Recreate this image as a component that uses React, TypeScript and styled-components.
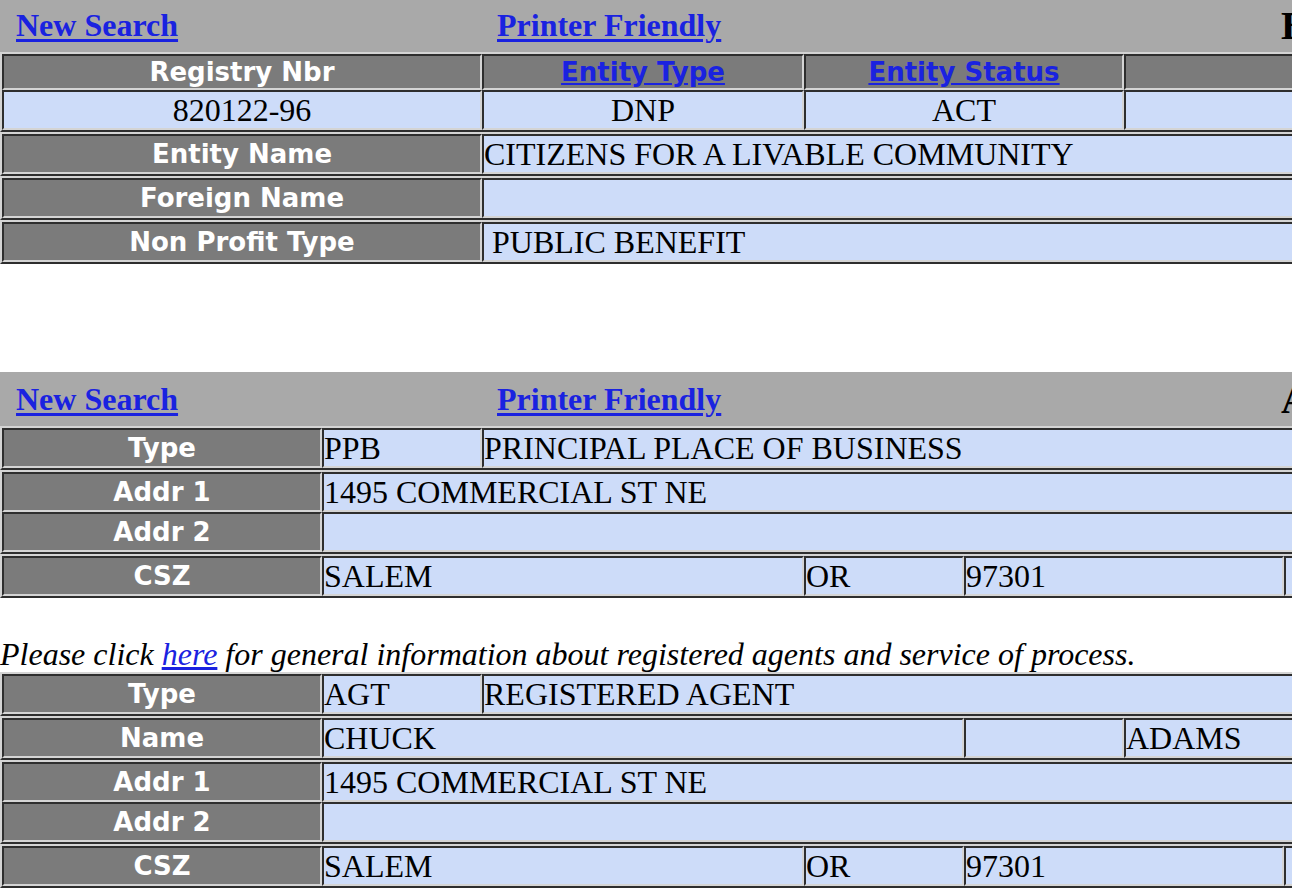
import React from 'react';
import styled, { createGlobalStyle } from 'styled-components';

const LIGHT = '#d4d4d4';
const DARK = '#2e2e2e';
const LINK = '#1a22e0';

const GlobalStyle = createGlobalStyle`
  html, body {
    margin: 0;
    padding: 0;
    background: #ffffff;
    overflow: hidden;
  }
  body {
    font-family: "Liberation Serif", "Times New Roman", serif;
    font-size: 32px;
    color: #000000;
  }
`;

const Page = styled.div`
  width: 1760px;
  margin-top: -2px;
`;

const Bar = styled.div`
  display: flex;
  align-items: center;
  height: 54px;
  padding-left: 16px;
  background: #a9a9a9;
`;

const BarSlot = styled.div<{ $w?: number }>`
  flex: ${(p) => (p.$w ? `0 0 ${p.$w}px` : '1 1 auto')};
  white-space: nowrap;
`;

const BarLink = styled.a`
  font-weight: bold;
  color: ${LINK};
  text-decoration: underline;
  text-underline-offset: 3px;
`;

const BarTitle = styled.span`
  font-size: 40px;
  font-weight: bold;
`;

const Grid = styled.div`
  border: 2px solid;
  border-color: ${LIGHT} ${DARK} ${DARK} ${LIGHT};
`;

const Row = styled.div`
  display: flex;
`;

const Cell = styled.div<{ $w?: number; $center?: boolean }>`
  box-sizing: border-box;
  flex: ${(p) => (p.$w ? `0 0 ${p.$w}px` : '1 1 auto')};
  border: 2px solid;
  border-color: ${DARK} ${LIGHT} ${LIGHT} ${DARK};
  white-space: nowrap;
  overflow: hidden;
`;

const Label = styled(Cell)`
  display: flex;
  align-items: center;
  justify-content: center;
  background: #7b7b7b;
  color: #ffffff;
  font-family: "DejaVu Sans", Verdana, sans-serif;
  font-weight: bold;
  font-size: 26px;
  line-height: 32px;
`;

const HeadLink = styled.a`
  color: ${LINK};
  text-decoration: underline;
`;

const Data = styled(Cell)`
  background: #cddcf9;
  line-height: 36px;
  text-align: ${(p) => (p.$center ? 'center' : 'left')};
`;

const Spacer = styled.div<{ $h: number }>`
  height: ${(p) => p.$h}px;
`;

const Note = styled.div`
  margin-top: 38px;
  line-height: 36px;
  font-style: italic;
  white-space: nowrap;
`;

const NoteLink = styled.a`
  color: ${LINK};
  text-decoration: underline;
`;

function TopBar({ title }: { title: string }) {
  return (
    <Bar>
      <BarSlot $w={481}>
        <BarLink href="#">New Search</BarLink>
      </BarSlot>
      <BarSlot $w={784}>
        <BarLink href="#">Printer Friendly</BarLink>
      </BarSlot>
      <BarSlot>
        <BarTitle>{title}</BarTitle>
      </BarSlot>
    </Bar>
  );
}

function AddressBlock({ type, typeName }: { type: string; typeName: string }) {
  return (
    <>
      <Grid>
        <Row>
          <Label $w={320}>Type</Label>
          <Data $w={160}>{type}</Data>
          <Data>{typeName}</Data>
        </Row>
      </Grid>
    </>
  );
}

function AddressRows() {
  return (
    <>
      <Grid>
        <Row>
          <Label $w={320}>Addr 1</Label>
          <Data>1495 COMMERCIAL ST NE</Data>
        </Row>
        <Row>
          <Label $w={320}>Addr 2</Label>
          <Data>&nbsp;</Data>
        </Row>
      </Grid>
      <Grid>
        <Row>
          <Label $w={320}>CSZ</Label>
          <Data $w={482}>SALEM</Data>
          <Data $w={160}>OR</Data>
          <Data $w={320}>97301</Data>
          <Data>&nbsp;</Data>
        </Row>
      </Grid>
    </>
  );
}

export default function App() {
  return (
    <>
      <GlobalStyle />
      <Page>
        <TopBar title="Business Entity Data" />
        <Grid>
          <Row>
            <Label $w={480}>Registry Nbr</Label>
            <Label $w={322}>
              <HeadLink href="#">Entity Type</HeadLink>
            </Label>
            <Label $w={320}>
              <HeadLink href="#">Entity Status</HeadLink>
            </Label>
            <Label>&nbsp;</Label>
          </Row>
          <Row>
            <Data $w={480} $center>820122-96</Data>
            <Data $w={322} $center>DNP</Data>
            <Data $w={320} $center>ACT</Data>
            <Data>&nbsp;</Data>
          </Row>
        </Grid>
        <Grid>
          <Row>
            <Label $w={480}>Entity Name</Label>
            <Data>CITIZENS FOR A LIVABLE COMMUNITY</Data>
          </Row>
        </Grid>
        <Grid>
          <Row>
            <Label $w={480}>Foreign Name</Label>
            <Data>&nbsp;</Data>
          </Row>
        </Grid>
        <Grid>
          <Row>
            <Label $w={480}>Non Profit Type</Label>
            <Data>&nbsp;PUBLIC BENEFIT</Data>
          </Row>
        </Grid>

        <Spacer $h={108} />

        <TopBar title="Associated Names" />
        <AddressBlock type="PPB" typeName="PRINCIPAL PLACE OF BUSINESS" />
        <AddressRows />

        <Note>
          Please click <NoteLink href="#">here</NoteLink> for general information about registered agents and service of process.
        </Note>

        <AddressBlock type="AGT" typeName="REGISTERED AGENT" />
        <Grid>
          <Row>
            <Label $w={320}>Name</Label>
            <Data $w={642}>CHUCK</Data>
            <Data $w={160}>&nbsp;</Data>
            <Data>ADAMS</Data>
          </Row>
        </Grid>
        <AddressRows />
      </Page>
    </>
  );
}
